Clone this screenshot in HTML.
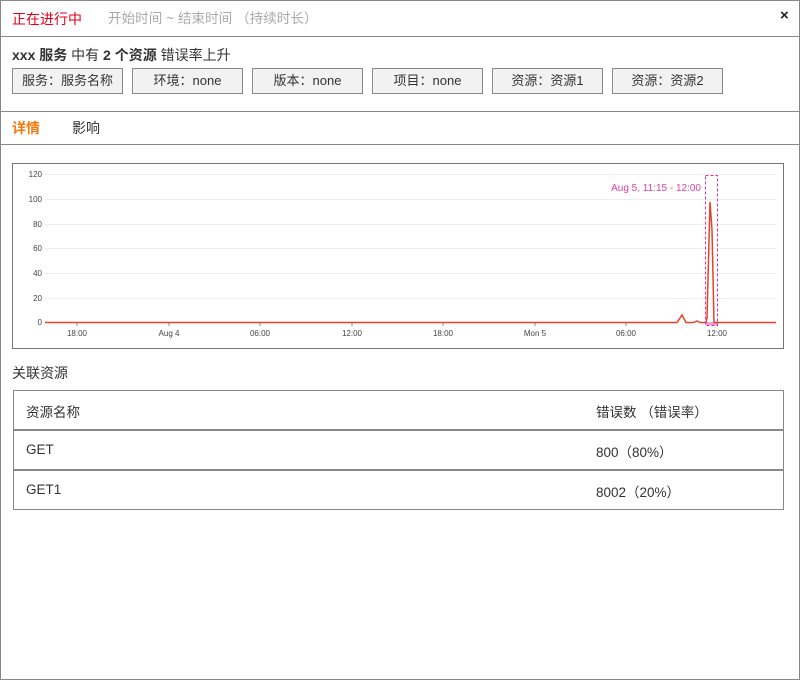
<!DOCTYPE html>
<html><head><meta charset="utf-8"><style>
body{margin:0;width:800px;height:680px;position:relative;font-family:"Liberation Sans","Noto Sans CJK SC",sans-serif;font-size:13px;color:#333;overflow:hidden}
.frame{position:absolute;left:0;top:0;width:798px;height:678px;border:1px solid #888}
.a{position:absolute;white-space:nowrap}
.hl{position:absolute;left:1px;width:798px;height:1px;background:#888}
.tag{position:absolute;top:68px;width:109px;height:24px;border:1px solid #888;background:#f2f2f2;text-align:center;line-height:24px;font-size:13px;color:#333}
.tbl{position:absolute;left:13px;top:390px;width:769px;height:118px;border:1px solid #888;font-size:13.5px}
.row{position:absolute;left:0;width:769px;height:39px;}
</style></head><body>
<div class="frame"></div>
<div class="a" style="left:12px;top:9px;color:#e0001a;font-size:14px">正在进行中</div>
<div class="a" style="left:108px;top:7px;color:#aaa;font-size:13.6px">开始时间 ~ 结束时间 （持续时长）</div>
<div class="a" style="left:780px;top:7px;font-size:15px;font-weight:bold;color:#222">×</div>
<div class="hl" style="top:36px"></div>
<div class="a" style="left:12px;top:45px;font-size:14px;color:#333"><b>xxx 服务</b> 中有 <b>2 个资源</b> 错误率上升</div>
<div class="tag" style="left:12px">服务：服务名称</div>
<div class="tag" style="left:132px">环境：none</div>
<div class="tag" style="left:252px">版本：none</div>
<div class="tag" style="left:372px">项目：none</div>
<div class="tag" style="left:492px">资源：资源1</div>
<div class="tag" style="left:612px">资源：资源2</div>
<div class="hl" style="top:111px"></div>
<div class="a" style="left:12px;top:118px;color:#f5780a;font-weight:bold;font-size:14px">详情</div>
<div class="a" style="left:72px;top:118px;color:#333;font-size:14px">影响</div>
<div class="hl" style="top:144px"></div>
<svg style="position:absolute;left:12px;top:163px" width="772" height="186" viewBox="12 163 772 186">
<rect x="12.5" y="163.5" width="771" height="185" fill="#fff" stroke="#777"/>
<g stroke="#eee" stroke-width="1">
<line x1="45" x2="776" y1="174.5" y2="174.5"/><line x1="45" x2="776" y1="199.5" y2="199.5"/>
<line x1="45" x2="776" y1="224.5" y2="224.5"/><line x1="45" x2="776" y1="248.5" y2="248.5"/>
<line x1="45" x2="776" y1="273.5" y2="273.5"/><line x1="45" x2="776" y1="298.5" y2="298.5"/>
</g>
<g font-size="8" fill="#444" text-anchor="end" font-family="Liberation Sans,sans-serif">
<text x="42" y="177">120</text><text x="42" y="202">100</text><text x="42" y="227">80</text>
<text x="42" y="251">60</text><text x="42" y="276">40</text><text x="42" y="301">20</text><text x="42" y="325">0</text>
</g>
<g font-size="8" fill="#444" text-anchor="middle" font-family="Liberation Sans,sans-serif">
<text x="77" y="336">18:00</text><text x="169" y="336">Aug 4</text><text x="260" y="336">06:00</text>
<text x="352" y="336">12:00</text><text x="443" y="336">18:00</text><text x="535" y="336">Mon 5</text>
<text x="626" y="336">06:00</text><text x="717" y="336">12:00</text>
</g>
<g stroke="#888"><line x1="77" x2="77" y1="322" y2="326"/><line x1="169" x2="169" y1="322" y2="326"/><line x1="260" x2="260" y1="322" y2="326"/><line x1="352" x2="352" y1="322" y2="326"/><line x1="443" x2="443" y1="322" y2="326"/><line x1="535" x2="535" y1="322" y2="326"/><line x1="626" x2="626" y1="322" y2="326"/><line x1="717" x2="717" y1="322" y2="326"/></g>
<rect x="706" y="322" width="11" height="3" fill="#e8a0d8"/>
<polyline fill="none" stroke="#e0452a" stroke-width="1.5" points="45,322.5 677,322.5 682,315 686,322.5 694,322.5 697,321 700,322.5 706,322.5 707,318 710,202 712,230 714,322.5 776,322.5"/>
<rect x="705.5" y="175.5" width="12" height="150" fill="none" stroke="#e4309c" stroke-dasharray="3,2"/>
<text x="701" y="191" font-size="10" fill="#e040a0" text-anchor="end" font-family="Liberation Sans,sans-serif">Aug 5, 11:15 - 12:00</text>
</svg>
<div class="a" style="left:12px;top:363px;color:#333;font-size:14px">关联资源</div>
<div class="tbl">
<div class="row" style="top:0;border-bottom:2px solid #888;height:38px"></div>
<div class="row" style="top:40px;border-bottom:2px solid #888;height:38px"></div>
<div class="a" style="left:12px;top:10px">资源名称</div>
<div class="a" style="left:582px;top:10px">错误数 （错误率）</div>
<div class="a" style="left:12px;top:51px">GET</div>
<div class="a" style="left:582px;top:50px">800（80%）</div>
<div class="a" style="left:12px;top:91px">GET1</div>
<div class="a" style="left:582px;top:90px">8002（20%）</div>
</div>
</body></html>
